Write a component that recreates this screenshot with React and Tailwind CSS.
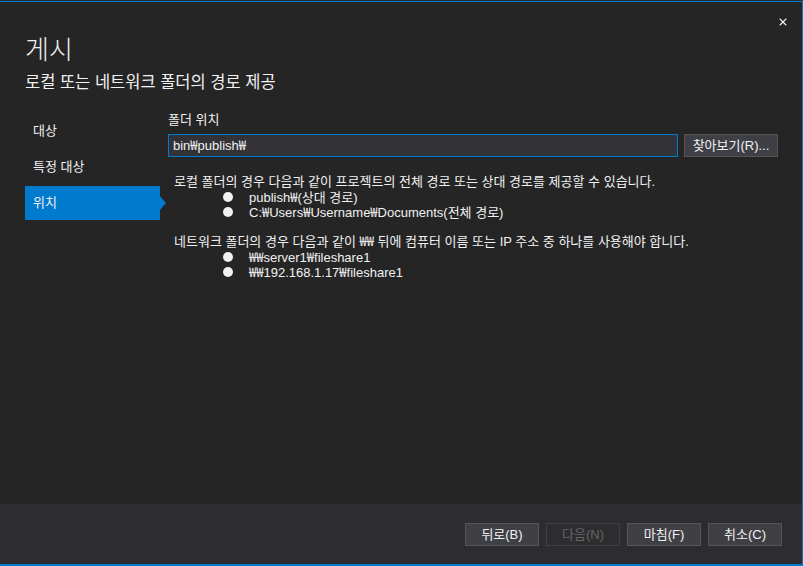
import { X } from "lucide-react";

const font = "font-['Liberation_Sans','Noto_Sans_CJK_KR',sans-serif]";

const navItems = ["대상", "특정 대상", "위치"];

// ₩ from the Korean font, narrower than the Liberation one
function Path({ text }) {
  const parts = text.split("₩");
  return parts.map((part, i) => (
    <span key={i}>
      {part}
      {i < parts.length - 1 ? <span className="font-['Noto_Sans_CJK_KR']">₩</span> : null}
    </span>
  ));
}

function Bullet({ children }) {
  return (
    <li className="flex h-[15px] items-center">
      <span className="ml-[49px] h-[10px] w-[10px] rounded-full bg-[#f1f1f1]" />
      <span className="ml-[16px]">
        <Path text={children} />
      </span>
    </li>
  );
}

function FooterButton({ children, disabled }) {
  return (
    <button
      className={
        disabled
          ? "h-[23px] w-[74px] border border-[#3f3f46] bg-[#2d2d30] text-[13px] leading-[21px] text-[#656565]"
          : "h-[23px] w-[74px] border border-[#555555] bg-[#3f3f46] text-[13px] leading-[21px] text-[#f1f1f1]"
      }
    >
      {children}
    </button>
  );
}

export default function App() {
  return (
    <div className={`flex h-[566px] w-[803px] flex-col bg-[#1e1e1e] text-[#f1f1f1] ${font}`}>
      <div className="h-px bg-[#2d2d30]" />
      <div className="relative flex flex-1 flex-col border-t border-r border-b-2 border-[#007acc] bg-[#252526]">
        <button className="absolute right-[13px] top-[14px] text-[#f1f1f1]">
          <X size={12} strokeWidth={2.2} />
        </button>

        <header className="px-[25px] pt-[31px]">
          <h1 className="text-[26px] font-light leading-[34px]">게시</h1>
          <p className="mt-[4px] text-[16.5px] leading-[22px]">로컬 또는 네트워크 폴더의 경로 제공</p>
        </header>

        <div className="mt-[19px] flex flex-1 pl-[25px] pr-[24px] text-[13px]">
          <nav className="flex w-[135px] flex-col gap-[2px] pt-[2px]">
            {navItems.map((item, i) =>
              i === 2 ? (
                <div key={item} className="relative flex h-[34px] items-center bg-[#007acc] pl-[8px]">
                  {item}
                  <span className="absolute left-full top-1/2 -translate-y-1/2 border-y-[7px] border-l-[6px] border-y-transparent border-l-[#007acc]" />
                </div>
              ) : (
                <div key={item} className="flex h-[34px] items-center pl-[8px]">
                  {item}
                </div>
              )
            )}
          </nav>

          <section className="ml-[8px] flex-1">
            <label className="block h-[16px] leading-[16px]">폴더 위치</label>
            <div className="mt-[6px] flex">
              <div className="flex h-[23px] flex-1 items-center border border-[#007acc] bg-[#333337] pl-[4px]">
                <Path text="bin₩publish₩" />
              </div>
              <button className="ml-[6px] h-[23px] w-[94px] border border-[#555555] bg-[#3f3f46] leading-[21px]">
                찾아보기(R)...
              </button>
            </div>

            <div className="mt-[17px] pl-[6px] leading-[15px]">
              <p>로컬 폴더의 경우 다음과 같이 프로젝트의 전체 경로 또는 상대 경로를 제공할 수 있습니다.</p>
              <ul>
                <Bullet>publish₩(상대 경로)</Bullet>
                <Bullet>C:₩Users₩Username₩Documents(전체 경로)</Bullet>
              </ul>
              <p className="mt-[14px]">
                <Path text="네트워크 폴더의 경우 다음과 같이 ₩₩ 뒤에 컴퓨터 이름 또는 IP 주소 중 하나를 사용해야 합니다." />
              </p>
              <ul>
                <Bullet>₩₩server1₩fileshare1</Bullet>
                <Bullet>₩₩192.168.1.17₩fileshare1</Bullet>
              </ul>
            </div>
          </section>
        </div>

        <footer className="flex h-[60px] items-center justify-end gap-[7px] bg-[#2d2d30] pr-[20px]">
          <FooterButton>뒤로(B)</FooterButton>
          <FooterButton disabled>다음(N)</FooterButton>
          <FooterButton>마침(F)</FooterButton>
          <FooterButton>취소(C)</FooterButton>
        </footer>
      </div>
    </div>
  );
}
